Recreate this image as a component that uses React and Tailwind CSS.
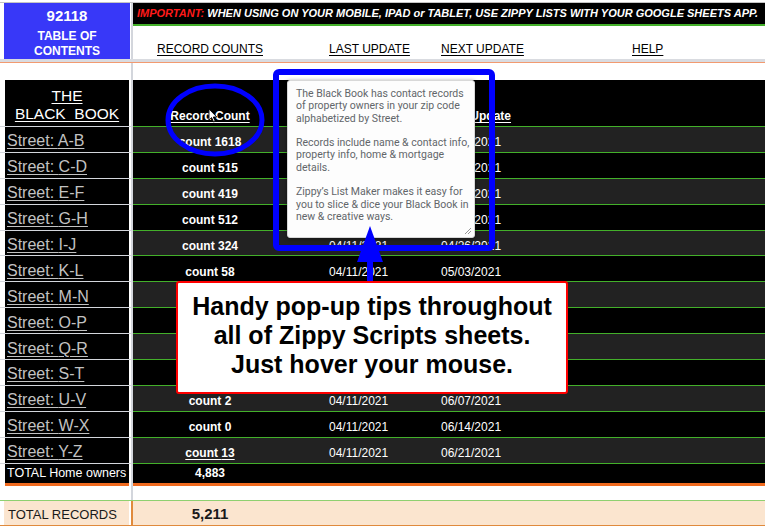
import React from "react"

const streets = [
    ['A-B', '1618', '03/29/2021'],
    ['C-D', '515', '04/05/2021'],
    ['E-F', '419', '04/12/2021'],
    ['G-H', '512', '04/19/2021'],
    ['I-J', '324', '04/26/2021'],
    ['K-L', '58', '05/03/2021'],
    ['M-N', '412', '05/10/2021'],
    ['O-P', '298', '05/17/2021'],
    ['Q-R', '187', '05/24/2021'],
    ['S-T', '525', '05/31/2021'],
    ['U-V', '2', '06/07/2021'],
    ['W-X', '0', '06/14/2021'],
    ['Y-Z', '13', '06/21/2021'],
]

const note = [
    ['The Black Book has contact records', 'of property owners in your zip code', 'alphabetized by Street.'],
    ['Records include name & contact info,', 'property info, home & mortgage', 'details.'],
    ['Zippy’s List Maker makes it easy for', 'you to slice & dice your Black Book in', 'new & creative ways.'],
]

// one sheet row: left (frozen) cell + main cell, the frozen divider runs down the right of the left wrapper
function Row({ h, left, main, leftWrap = '', mainCls = '' }) {
    return (
        <div className={`flex ${h}`}>
            <div className={`w-[133px] shrink-0 bg-white border-r-2 border-[#d3d6dc] flex ${leftWrap}`}>
                {left}
            </div>
            <div className={`flex-1 flex ${mainCls}`}>{main}</div>
        </div>
    )
}

export default function App() {
    return (
        <div className="relative w-[765px] h-[526px] overflow-hidden bg-white font-['Liberation_Sans',Arial,sans-serif]">
            {/* top gridline strip */}
            <div className="h-[3px] border-b border-[#c4c4c4]" />

            {/* title row */}
            <Row
                h="h-[56px]"
                left={
                    <div className="ml-[4px] w-[126px] bg-[#3838f8] text-white font-bold text-center flex flex-col items-center">
                        <div className="text-[15px] leading-none mt-[5px]">92118</div>
                        <div className="text-[12px] leading-[15px] mt-[6px]">TABLE OF</div>
                        <div className="text-[12px] leading-[15px]">CONTENTS</div>
                    </div>
                }
                mainCls="flex-col"
                main={
                    <>
                        <div className="h-[23px] bg-black border-b-2 border-[#43b02a] flex items-center pl-[4px] whitespace-nowrap text-[11px] font-bold italic text-white">
                            <span className="text-[#ff1a1a]">IMPORTANT:</span>
                            <span>&nbsp;WHEN USING ON YOUR MOBILE, IPAD or TABLET, USE ZIPPY LISTS WITH YOUR GOOGLE SHEETS APP.</span>
                        </div>
                        <div className="flex-1 flex items-center pt-[12px] text-[12px] text-black underline underline-offset-2">
                            <div className="w-[154px] text-center">RECORD COUNTS</div>
                            <div className="ml-[42px] w-[112px]">LAST UPDATE</div>
                            <div className="w-[191px]">NEXT UPDATE</div>
                            <div>HELP</div>
                        </div>
                    </>
                }
            />

            {/* frozen row divider + orange border */}
            <div className="h-[2.5px] bg-[#d9dbe0]" />
            <div className="h-[1.5px] bg-[#f29a70]" />

            <Row h="h-[17px]" left={null} main={null} />

            {/* black book header */}
            <Row
                h="h-[47px]"
                leftWrap="border-b border-[#a9a9a9]"
                left={
                    <div className="ml-[5px] w-[124px] bg-black text-white text-[15.5px] leading-[18px] underline underline-offset-2 text-center pt-[7px]">
                        THE<br />BLACK_BOOK
                    </div>
                }
                mainCls="bg-black border-b border-[#43b02a] items-end pb-[1px]"
                main={
                    <div className="flex text-[12px] font-bold text-white underline underline-offset-2">
                        <div className="w-[154px] text-center">Record Count</div>
                        <div className="ml-[42px] w-[112px]">Last Update</div>
                        <div>Next Update</div>
                    </div>
                }
            />

            {streets.map(([range, count, next], i) => (
                <Row
                    key={range}
                    h="h-[25.9px]"
                    leftWrap="border-b border-[#a9a9a9]"
                    left={
                        <div className="ml-[5px] w-[124px] bg-black pl-[2px] pt-[4px] flex items-center text-[16px] text-[#c2c2c2] underline underline-offset-2 decoration-1">
                            Street: {range}
                        </div>
                    }
                    mainCls={`${i % 2 === 0 ? 'bg-[#222222]' : 'bg-black'} border-b border-[#43b02a] items-center pt-[6px] text-white text-[12px]`}
                    main={
                        <>
                            <div className={`w-[154px] text-center font-bold ${range === 'Y-Z' ? 'underline underline-offset-2' : ''}`}>count {count}</div>
                            <div className="ml-[42px] w-[112px]">04/11/2021</div>
                            <div>{next}</div>
                        </>
                    }
                />
            ))}

            {/* totals */}
            <Row
                h="h-[19.3px]"
                left={
                    <div className="ml-[5px] w-[124px] bg-black text-white text-[12.5px] pl-[2px] flex items-center whitespace-nowrap">
                        TOTAL Home owners
                    </div>
                }
                mainCls="bg-black items-center text-white text-[12px] font-bold"
                main={<div className="w-[154px] text-center">4,883</div>}
            />
            <Row
                h="h-[3px]"
                left={<div className="ml-[5px] w-[124px] bg-[#f06a1e]" />}
                mainCls="bg-[#f06a1e]"
                main={null}
            />
            <Row h="h-[14px]" left={null} main={null} />
            <div className="h-[1px] bg-[#8fd070]" />
            <Row
                h="h-[25px]"
                leftWrap="border-b border-[#e08a3c]"
                left={
                    <div className="ml-[4px] w-[125px] bg-[#fbe5cf] text-[13px] text-[#1a1a1a] pl-[4px] pt-[4px] flex items-center">
                        TOTAL RECORDS
                    </div>
                }
                mainCls="bg-[#fbe5cf] border-b border-[#e08a3c] items-center pt-[3px] text-[15px] text-[#1a1a1a] font-bold"
                main={<div className="w-[154px] text-center">5,211</div>}
            />

            {/* blue ellipse around Record Count */}
            <svg className="absolute left-[164px] top-[83px]" width="102" height="74" viewBox="0 0 102 74">
                <ellipse cx="51" cy="37" rx="47" ry="34" fill="none" stroke="#0000ff" strokeWidth="5" />
            </svg>

            {/* mouse pointer */}
            <svg className="absolute left-[208px] top-[108px]" width="10" height="15" viewBox="0 0 10 15">
                <path d="M1 1 L1 12 L3.6 9.6 L5.6 14 L7.2 13.3 L5.3 9 L8.8 9 Z" fill="#fff" stroke="#000" strokeWidth="0.9" strokeLinejoin="round" />
            </svg>

            {/* blue frame */}
            <div className="absolute left-[273px] top-[69px] w-[222px] h-[182px] border-[6px] border-[#0000ff] rounded-[6px]" />

            {/* hover note */}
            <div className="absolute left-[287px] top-[80px] w-[188px] h-[158px] bg-[#fdfdfd] border border-[#d8d8d8] rounded-[3px] shadow-[0_1px_4px_rgba(0,0,0,0.45)] pl-[8px] pt-[7px] font-['Roboto',sans-serif] text-[10.5px] leading-[12.3px] text-[#62666a] whitespace-nowrap">
                {note.map((para, i) => (
                    <p key={i} className={i > 0 ? 'mt-[12.3px]' : ''}>
                        {para.map(line => <span key={line} className="block">{line}</span>)}
                    </p>
                ))}
                <svg className="absolute right-[2px] bottom-[2px]" width="8" height="8" viewBox="0 0 8 8">
                    <path d="M7 1 L1 7 M7 4 L4 7" stroke="#8a8a8a" strokeWidth="0.9" />
                </svg>
            </div>

            {/* blue arrow */}
            <svg className="absolute left-[356px] top-[225px]" width="28" height="60" viewBox="0 0 28 60">
                <path d="M14 1 L27 37 L1 37 Z" fill="#0000ff" />
                <rect x="11" y="35" width="6" height="25" fill="#0000ff" />
            </svg>

            {/* red callout */}
            <div className="absolute left-[176px] top-[281px] w-[392px] h-[113px] bg-white border-2 border-[#ff0000] rounded-[3px] flex items-center justify-center pb-[4px] text-center text-black font-bold text-[25px] leading-[29px]">
                <div>
                    Handy pop-up tips throughout<br />
                    all of Zippy Scripts sheets.<br />
                    Just hover your mouse.
                </div>
            </div>
        </div>
    )
}
